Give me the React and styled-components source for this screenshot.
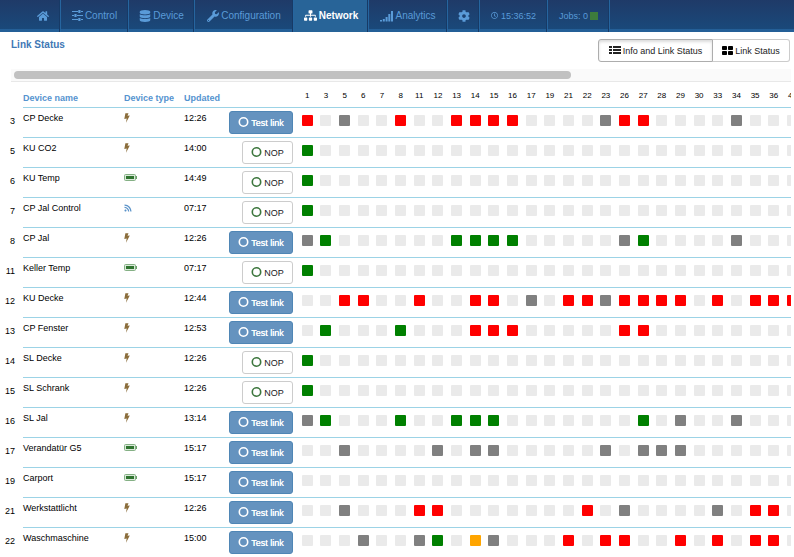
import React from "react";
import styled, { createGlobalStyle, css } from "styled-components";
import {
  FaHome, FaDatabase, FaWrench, FaSitemap, FaCog, FaRegClock, FaRss,
} from "react-icons/fa";

const GlobalStyle = createGlobalStyle`
  * { box-sizing: border-box; }
  body {
    margin: 0;
    background: #fff;
    color: #000;
    font-family: "Liberation Sans", Arial, sans-serif;
    font-size: 9px;
    line-height: 12px;
    overflow: hidden;
  }
  svg { display: block; flex: none; }
`;

const NavBar = styled.nav`
  display: flex;
  height: 32px;
  background: linear-gradient(#1f3a68, #194a7c) border-box;
  box-shadow: inset 0 -3px #245f97;
`;

const NavItem = styled.a`
  display: flex;
  align-items: center;
  justify-content: center;
  gap: ${(p) => p.$gap || 2}px;
  width: ${(p) => p.$width}px;
  height: 32px;
  padding: 0 0 1px ${(p) => p.$indent || 0}px;
  border-right: 1px solid #26659f;
  box-shadow: inset -1px 0 #173a66;
  color: #5a9bd8;
  font-size: ${(p) => (p.$small ? 9 : 10)}px;
  text-decoration: none;
  white-space: nowrap;
  ${(p) =>
    p.$active &&
    css`
      background: #286498;
      color: #fff;
      font-weight: bold;
    `}
`;

const JobLight = styled.span`
  width: 8px;
  height: 8px;
  background: #3d7b3c;
`;

const TitleRow = styled.header`
  display: flex;
  justify-content: space-between;
  padding: 7px 4px 7px 11px;
`;

const Title = styled.h1`
  margin: 0;
  color: #3f78b5;
  font-size: 10px;
  line-height: 12px;
`;

const ViewSwitch = styled.div`
  display: flex;
`;

const ViewButton = styled.button`
  display: flex;
  align-items: center;
  justify-content: center;
  gap: 2px;
  width: ${(p) => p.$width}px;
  height: 23px;
  padding: 0;
  border: 1px solid #ccc;
  border-radius: 0 3px 3px 0;
  background: #fff;
  color: #222;
  font-family: inherit;
  font-size: 9px;
  & + & { border-left: 0; }
  ${(p) =>
    p.$active &&
    css`
      border-color: #adadad;
      border-radius: 3px 0 0 3px;
      box-shadow: inset 0 2px 3px rgba(0, 0, 0, 0.14);
    `}
`;

const ScrollTrack = styled.div`
  margin: 0 3px 0 11px;
  padding: 2px 3px;
  border-bottom: 1px solid #e8e8e8;
  background: #fafafa;
`;

const ScrollThumb = styled.div`
  width: 72%;
  height: 8px;
  border-radius: 4px;
  background: #c1c1c1;
`;

const TableFrame = styled.div`
  margin-right: 3px;
  overflow: hidden;
`;

const LinkTable = styled.table`
  width: 802px;
  border-collapse: separate;
  border-spacing: 0;
  table-layout: fixed;
`;

const Col = styled.col`
  width: ${(p) => p.$width}px;
`;

const HeadCell = styled.th`
  height: 26px;
  padding: 6px 0 0;
  border-bottom: 1px solid #9cd3e6;
  color: #5593cf;
  font-size: 9px;
  font-weight: bold;
  text-align: left;
  white-space: nowrap;
`;

const LinkHead = styled(HeadCell)`
  padding: 2px 0 0;
  color: #000;
  font-size: 8px;
  font-weight: normal;
  text-align: center;
`;

const Corner = styled.td`
  padding: 0;
`;

const Address = styled.th`
  height: 30px;
  padding: 7px 8px 0 0;
  font-size: 9px;
  font-weight: normal;
  text-align: right;
  vertical-align: top;
`;

const Cell = styled.td`
  padding: 4px 0 0;
  border-bottom: 1px solid #9cd3e6;
  vertical-align: top;
  white-space: nowrap;
`;

const ActionCell = styled(Cell)`
  padding: 3px 5px 0 0;
`;

const LinkCell = styled(Cell)`
  padding: 7px 0 0;
`;

const IconBox = styled.span`
  display: flex;
  align-items: center;
  height: 11px;
`;

const ActionButton = styled.button`
  display: flex;
  align-items: center;
  justify-content: center;
  gap: 2px;
  width: ${(p) => (p.$primary ? 64 : 51)}px;
  height: 23px;
  margin-left: auto;
  padding: 0;
  border: 1px solid ${(p) => (p.$primary ? "#4f86b5" : "#ccc")};
  border-radius: 3px;
  background: ${(p) => (p.$primary ? "#6593bf" : "#fff")};
  color: ${(p) => (p.$primary ? "#fff" : "#222")};
  font-family: inherit;
  font-size: 9px;
  text-shadow: ${(p) => (p.$primary ? "0 0 currentColor" : "none")};
`;

const COLORS = { r: "#f00", g: "#008000", k: "#808080", o: "#ffa500", ".": "#eaeaea" };

const Status = styled.span`
  display: block;
  width: 11px;
  height: 11px;
  margin: 0 auto;
  border-radius: 1px;
  background: ${(p) => COLORS[p.$state]};
`;

const SlidersIcon = () => (
  <svg width="11" height="11" viewBox="0 0 11 11" fill="currentColor" aria-hidden="true">
    <path d="M0 1h6v1H0zM9 1h2v1H9zM6.3 0h2.2v3H6.3zM0 5h2v1H0zM5 5h6v1H5zM2.4 4h2.2v3H2.4zM0 9h6v1H0zM9 9h2v1H9zM6.3 8h2.2v3H6.3z" />
  </svg>
);

const SignalIcon = () => (
  <svg width="13" height="12" viewBox="0 0 13 12" fill="currentColor" aria-hidden="true">
    <path d="M0 10h2v1.5H0zM2.8 9h2v2.5h-2zM5.6 7h2v4.5h-2zM8.3 4h2v7.500h-2zM11 1h2v10.500h-2z" />
  </svg>
);

const ListIcon = () => (
  <svg width="12" height="10" viewBox="0 0 12 10" fill="currentColor" aria-hidden="true">
    <path d="M0 0h3v2H0zM4 0h8v2H4zM0 3h3v2H0zM4 3h8v2H4zM0 6h3v2H0zM4 6h8v2H4z" />
  </svg>
);

const TilesIcon = () => (
  <svg width="11" height="10" viewBox="0 0 11 10" aria-hidden="true">
    <g fill="#000">
      <rect width="5" height="4" rx="0.8" />
      <rect x="6" width="5" height="4" rx="0.8" />
      <rect y="5" width="5" height="4" rx="0.8" />
      <rect x="6" y="5" width="5" height="4" rx="0.8" />
    </g>
  </svg>
);

const BoltIcon = () => (
  <svg width="6" height="10" viewBox="0 0 6 10" fill="#8a6d3b" aria-label="Mains powered" role="img">
    <path d="M1.400 0.300 4.500 0.300 3.500 2.800 5.800 2.600 2 9.800 2.700 5.600 0.300 6z" />
  </svg>
);

const BatteryIcon = () => (
  <svg width="13" height="7" viewBox="0 0 13 7" aria-label="Battery" role="img">
    <rect x="0.500" y="0.500" width="11" height="6" rx="1" fill="#dbe9db" stroke="#85b085" />
    <rect x="2" y="2" width="8" height="3" fill="#2f742f" />
    <path d="M12 2h1v3h-1z" fill="#6b9f6b" />
  </svg>
);

const CircleIcon = ({ color }) => (
  <svg width="11" height="11" viewBox="0 0 11 11" aria-hidden="true">
    <circle cx="5.5" cy="5" r="4.200" fill="none" stroke={color} strokeWidth="1.600" />
  </svg>
);

const TYPE_ICONS = {
  mains: <BoltIcon />,
  battery: <BatteryIcon />,
  wireless: <FaRss size={8} color="#5b93c9" aria-label="Wireless" />,
};

const LINKS = [1, 3, 5, 6, 7, 8, 11, 12, 13, 14, 15, 16, 17, 19, 21, 22, 23, 26, 27, 28, 29, 30, 33, 34, 35, 36, 40];

const DEVICES = [
  [3, "CP Decke", "mains", "12:26", true, "r.k..r..rrrr....krr....k..."],
  [5, "KU CO2", "mains", "14:00", false, "g.........................."],
  [6, "KU Temp", "battery", "14:49", false, "g.........................."],
  [7, "CP Jal Control", "wireless", "07:17", false, "g.........................."],
  [8, "CP Jal", "mains", "12:26", true, "kg......gggg.....kg....k..."],
  [11, "Keller Temp", "battery", "07:17", false, "g.........................."],
  [12, "KU Decke", "mains", "12:44", true, "..rr..r..rr.k.rrkrrrr.r.rrr"],
  [13, "CP Fenster", "mains", "12:53", true, ".g...g...rrr.....rr........"],
  [14, "SL Decke", "mains", "12:26", false, "g.........................."],
  [15, "SL Schrank", "mains", "12:26", false, "g.........................."],
  [16, "SL Jal", "mains", "13:14", true, "kg...g..ggg.......g.k..k..."],
  [17, "Verandatür G5", "battery", "15:17", true, "..k....k.kk.....k.kkk......"],
  [19, "Carport", "battery", "15:17", true, "..........................."],
  [21, "Werkstattlicht", "mains", "12:26", true, "..k...rr.......r.k....k.rr."],
  [22, "Waschmaschine", "mains", "15:00", true, "...k..kg.ok...r.rr..r.r.rr."],
];

function DeviceRow({ device }) {
  const [id, name, type, updated, testable, states] = device;
  return (
    <tr>
      <Address scope="row">{id}</Address>
      <Cell>{name}</Cell>
      <Cell><IconBox>{TYPE_ICONS[type]}</IconBox></Cell>
      <Cell>{updated}</Cell>
      <ActionCell>
        <ActionButton type="button" $primary={testable}>
          <CircleIcon color={testable ? "#fff" : "#3c763d"} />
          {testable ? "Test link" : "NOP"}
        </ActionButton>
      </ActionCell>
      {LINKS.map((link, i) => (
        <LinkCell key={link}><Status $state={states[i]} /></LinkCell>
      ))}
    </tr>
  );
}

export default function App() {
  return (
    <>
      <GlobalStyle />
      <NavBar>
        <NavItem href="#home" $width={61} $indent={26} aria-label="Home"><FaHome size={12} /></NavItem>
        <NavItem href="#control" $width={68}><SlidersIcon />Control</NavItem>
        <NavItem href="#device" $width={66}><FaDatabase size={12} />Device</NavItem>
        <NavItem href="#configuration" $width={99}><FaWrench size={12} />Configuration</NavItem>
        <NavItem href="#network" $width={75} $active aria-current="page"><FaSitemap size={13} />Network</NavItem>
        <NavItem href="#analytics" $width={79}><SignalIcon />Analytics</NavItem>
        <NavItem href="#settings" $width={32} aria-label="Settings"><FaCog size={12} /></NavItem>
        <NavItem href="#time" $width={68} $small $gap={3}><FaRegClock size={7} />15:36:52</NavItem>
        <NavItem href="#jobs" $width={62} $small>Jobs: 0<JobLight /></NavItem>
      </NavBar>
      <main>
        <TitleRow>
          <Title>Link Status</Title>
          <ViewSwitch>
            <ViewButton type="button" $width={115} $active aria-pressed="true"><ListIcon />Info and Link Status</ViewButton>
            <ViewButton type="button" $width={77} aria-pressed="false"><TilesIcon />Link Status</ViewButton>
          </ViewSwitch>
        </TitleRow>
        <ScrollTrack><ScrollThumb /></ScrollTrack>
        <TableFrame>
          <LinkTable>
            <colgroup>
              <Col $width={23} />
              <Col $width={101} />
              <Col $width={60} />
              <Col $width={44} />
              <Col $width={70} />
              {LINKS.map((link) => <col key={link} />)}
            </colgroup>
            <thead>
              <tr>
                <Corner />
                <HeadCell scope="col">Device name</HeadCell>
                <HeadCell scope="col">Device type</HeadCell>
                <HeadCell scope="col">Updated</HeadCell>
                <HeadCell scope="col" aria-label="Action" />
                {LINKS.map((link) => <LinkHead key={link} scope="col">{link}</LinkHead>)}
              </tr>
            </thead>
            <tbody>
              {DEVICES.map((device) => <DeviceRow key={device[0]} device={device} />)}
            </tbody>
          </LinkTable>
        </TableFrame>
      </main>
    </>
  );
}
